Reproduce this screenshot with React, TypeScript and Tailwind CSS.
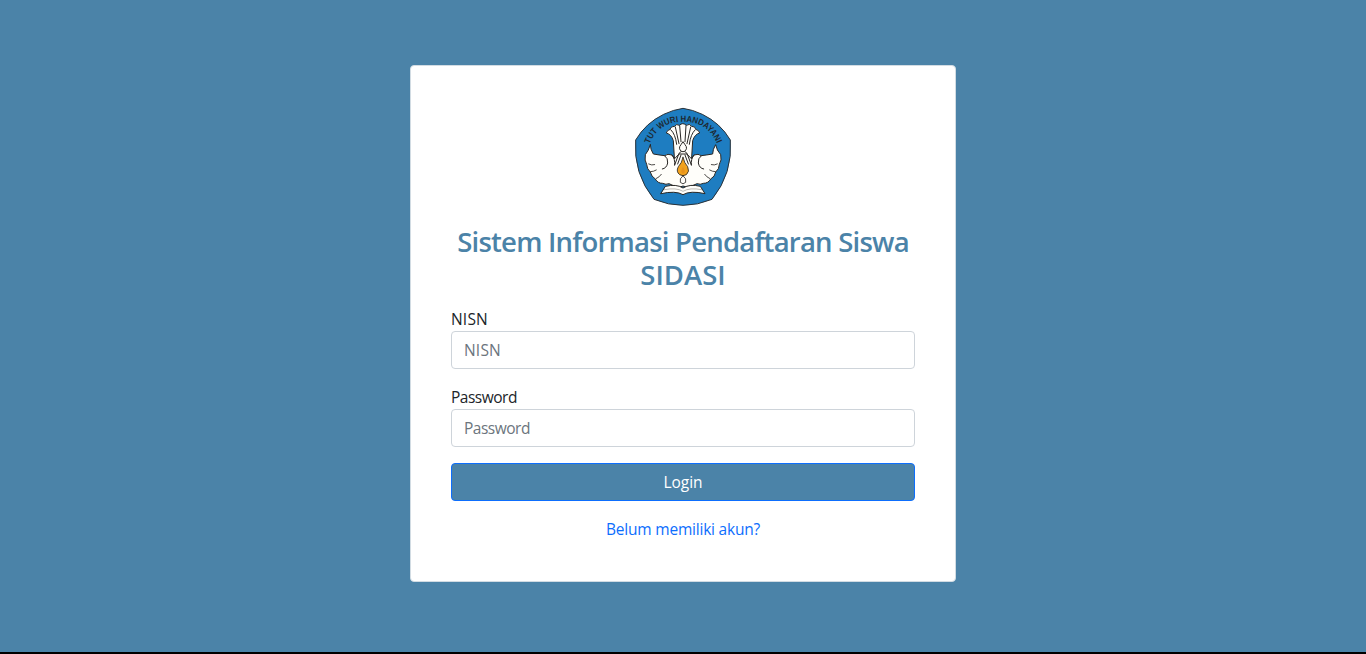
function Emblem() {
  return (
    <svg viewBox="0 0 318 318" className="block h-[106px] w-[106px]" role="img" aria-label="Tut Wuri Handayani">
      <path
        d="M159 13 Q130 17 101 31 Q47 57 17 108 Q9 208 72 286 Q159 322 246 286 Q309 208 301 108 Q271 57 217 31 Q188 17 159 13Z"
        fill="#1e7dc1"
        stroke="#2b3238"
        strokeWidth="3"
        strokeLinejoin="round"
      />
      <defs>
        <path id="motto" d="M59 120 C75 76 112 53 159 53 C207 53 244 74 262 122" />
      </defs>
      <text fill="#1d2830" className="font-['Liberation_Sans'] text-[26px] font-bold">
        <textPath href="#motto" textLength="258" lengthAdjust="spacingAndGlyphs">TUT WURI HANDAYANI</textPath>
      </text>
      <g fill="#fffefa" stroke="#292724" strokeWidth="3" strokeLinejoin="round" strokeLinecap="round">
        <path d="M134 176 L130 110 Q124 91 109 87 Q111 78 121 76 Q121 68 134 67 Q139 58 148 64 Q158 54 169 64 Q179 57 185 67 Q197 67 197 76 Q207 78 209 87 Q194 91 188 110 L184 176Z" />
        <path d="M123 78 Q136 90 140 121 M136 69 L147 119 M149 65 L153 113 M168 65 L165 113 M182 69 L171 119 M195 78 Q182 90 178 121" fill="none" />
        <path d="M61 122 Q56 140 46 152 Q43 170 50 181 Q51 196 61 204 Q64 218 76 225 Q83 238 98 238 Q108 243 117 239 Q146 254 159 246 Q173 253 201 239 Q211 243 220 238 Q235 238 242 225 Q255 218 257 204 Q268 195 268 181 Q276 169 272 152 Q260 139 257 122 Q248 136 248 150 Q230 153 214 155 Q205 148 192 153 L184 164 L171 150 L147 150 L134 164 L126 153 Q113 148 104 155 Q87 153 70 150 Q61 137 61 122Z" />
        <path d="M104 155 Q115 163 113 177 Q110 193 97 195 M214 155 Q203 163 205 177 Q208 193 221 195 M126 153 Q136 165 134 183 M192 153 Q182 165 184 183" fill="none" strokeWidth="3" />
        <path d="M56 180 Q65 185 74 182 M62 203 Q71 203 79 198 M78 224 Q88 220 94 211 M244 182 Q253 185 262 180 M239 198 Q247 203 256 203 M224 211 Q230 220 240 224" fill="none" strokeWidth="2.5" />
        <path d="M154 142 Q143 133 153 122 L159 113 L165 122 Q175 133 164 142Z" />
        <path d="M154 142 Q146 145 144 156 L134 183 M164 142 Q172 145 174 156 L184 183 M153 153 L143 180 M165 153 L175 180" fill="none" strokeWidth="3" />
        <path d="M159 160 Q163 178 173 188 Q180 203 169 212 Q159 218 149 212 Q137 203 145 188 Q156 177 159 160Z" fill="#f2a21e" strokeWidth="2.5" />
        <path d="M159 188 Q170 204 159 209 Q148 204 159 188Z" fill="#e9941c" stroke="none" />
        <path d="M159 215 Q147 224 151 235 Q159 244 167 235 Q171 224 159 215Z" strokeWidth="2.5" />
        <path d="M107 247 Q139 239 159 252 Q180 239 211 247 L225 269 Q181 259 159 272 Q137 259 93 269Z" />
        <path d="M103 257 Q139 250 159 262 Q179 250 215 257" fill="none" stroke="#77736b" strokeWidth="1.5" />
      </g>
    </svg>
  );
}

function Field({ id, type, label, tracking }: { id: string; type: string; label: string; tracking: string }) {
  return (
    <div className={`mb-4 flex flex-col ${tracking}`}>
      <label htmlFor={id} className="h-6 leading-6 text-[#212529]">
        {label}
      </label>
      <input
        id={id}
        type={type}
        placeholder={label}
        className="h-[38px] w-full rounded border border-[#ced4da] bg-white px-3 text-[15.5px] text-[#212529] outline-none placeholder:text-[#6c757d]"
      />
    </div>
  );
}

export default function App() {
  return (
    <main className="flex h-[654px] flex-col items-center border-b-2 border-black bg-[#4b83a8] pt-[65px] font-['Open_Sans',sans-serif] text-[15.5px]">
      <section className="flex h-[517px] w-[546px] flex-col rounded border border-[#d2dce3] bg-white px-10 pt-[38px]">
        <div className="flex h-[121px] justify-center">
          <Emblem />
        </div>
        <h1 className="mb-4 flex flex-col items-center text-[27.5px] leading-[33px] font-semibold whitespace-nowrap text-[#4b83a8]">
          <span className="tracking-[-0.78px]">Sistem Informasi Pendaftaran Siswa</span>
          <span>SIDASI</span>
        </h1>
        <form className="flex flex-col" onSubmit={(e) => e.preventDefault()}>
          <Field id="nisn" type="text" label="NISN" tracking="tracking-[0.2px]" />
          <Field id="password" type="password" label="Password" tracking="tracking-[-0.5px]" />
          <button className="h-[38px] w-full rounded border border-[#0d6efd] bg-[#4b83a8] pt-0.5 text-white">Login</button>
        </form>
        <a href="#" className="mt-4 text-center leading-6 tracking-[-0.21px] text-[#0d6efd]">Belum memiliki akun?</a>
      </section>
    </main>
  );
}
